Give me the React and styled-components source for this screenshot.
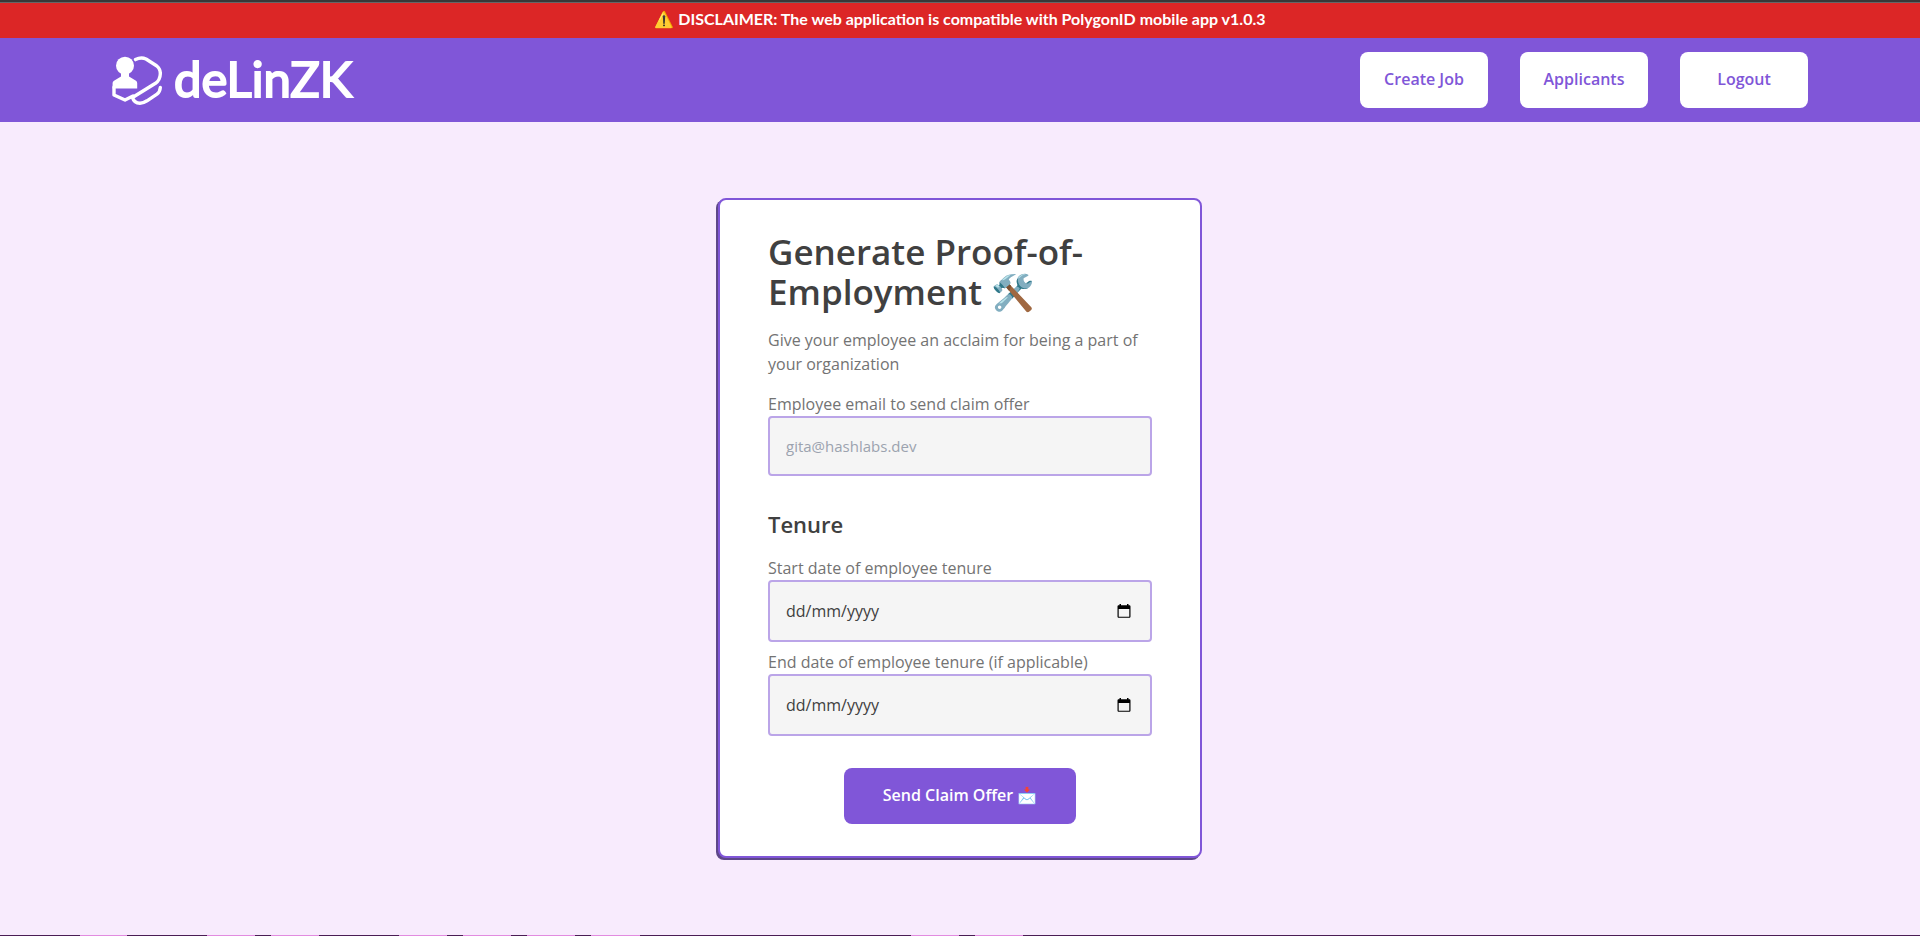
import React, { useId } from "react";
import styled, { createGlobalStyle, css } from "styled-components";

const colors = {
  purple: "#8056d8",
  purpleLight: "#bba5e8",
  purpleDark: "#5e4789",
  lavender: "#f8ebfd",
  red: "#dc2626",
  ink: "#404040",
  muted: "#737373",
  field: "#f5f5f5",
  plum: "#4b1d55",
  pink: "#e28be0",
};

const GlobalStyle = createGlobalStyle`
  *, *::before, *::after { box-sizing: border-box; }
  body {
    margin: 0;
    background: ${colors.lavender};
    color: ${colors.ink};
    font-family: "Open Sans", "Noto Color Emoji", sans-serif;
    font-size: 16px;
    line-height: 24px;
  }
  button, input { font: inherit; }
`;

const Page = styled.div`
  min-height: 100vh;
  display: flex;
  flex-direction: column;
  border-top: 2px solid #383838;
`;

const Disclaimer = styled.p`
  margin: 0;
  padding: 4px 16px 7px;
  border-top: 1px solid #666666;
  background: ${colors.red};
  color: white;
  font-family: Lato, "Noto Color Emoji", sans-serif;
  font-weight: 700;
  text-align: center;
`;

const Header = styled.header`
  display: flex;
  align-items: center;
  justify-content: space-between;
  flex-wrap: wrap;
  padding: 14px 112px;
  background: ${colors.purple};
`;

const HomeLink = styled.a`
  display: flex;
  align-items: center;
  gap: 12px;
  color: white;
  text-decoration: none;
`;

const Wordmark = styled.span`
  font-family: Lato, sans-serif;
  font-size: 49px;
  font-weight: 400;
  line-height: 52px;
  padding-bottom: 4px;
  -webkit-text-stroke: 2px white;
  stroke-linejoin: round;
`;

const Nav = styled.nav`
  display: flex;
  gap: 32px;
`;

const Button = styled.button`
  height: 56px;
  min-width: 128px;
  padding: 0 16px 2px;
  border: 0;
  border-radius: 8px;
  background: white;
  color: ${colors.purple};
  font-weight: 600;
  cursor: pointer;

  ${(p) =>
    p.$primary &&
    css`
      align-self: center;
      min-width: 232px;
      margin-top: 32px;
      background: ${colors.purple};
      color: white;
    `}
`;

const Main = styled.main`
  flex: 1;
  display: flex;
  justify-content: center;
  align-items: center;
  padding: 32px 16px 34px;
`;

const Card = styled.form`
  display: flex;
  flex-direction: column;
  width: 100%;
  max-width: 484px;
  padding: 32px 48px;
  border: 2px solid ${colors.purple};
  border-radius: 8px;
  background: white;
  box-shadow: -2px 2px 0 ${colors.purpleDark};
`;

const Title = styled.h1`
  margin: 0;
  font-size: 35px;
  font-weight: 600;
  line-height: 40px;
`;

const Intro = styled.p`
  margin: 16px 0;
  color: ${colors.muted};
`;

const SectionTitle = styled.h2`
  margin: 32px 0 16px;
  font-size: 22px;
  font-weight: 600;
  line-height: 32px;
`;

const FieldGroup = styled.div`
  display: flex;
  flex-direction: column;

  & + & {
    margin-top: 8px;
  }
`;

const Label = styled.label`
  color: ${colors.muted};
  font-weight: 500;
`;

const InputFrame = styled.div`
  display: flex;
  align-items: center;
  height: ${(p) => (p.$tall ? 62 : 60)}px;
  padding: 0 16px;
  border: 2px solid ${colors.purpleLight};
  border-radius: 4px;
  background: ${colors.field};
`;

const Input = styled.input`
  flex: 1;
  min-width: 0;
  padding: 0;
  border: 0;
  outline: 0;
  background: transparent;
  color: ${colors.ink};
  font-size: ${(p) => (p.$strong ? 16 : 15)}px;

  &::placeholder {
    color: ${(p) => (p.$strong ? colors.ink : "#9ca3af")};
    opacity: 1;
  }
`;

const PickerButton = styled.button`
  display: flex;
  padding: 2px;
  border: 0;
  background: transparent;
  cursor: pointer;
`;

/* Pink dashes on the plum base line, as [start, end] in pixels. */
const dashes = [
  [80, 127], [207, 255], [271, 319], [399, 447], [463, 511],
  [527, 575], [591, 640], [911, 959], [975, 1023],
];

const stops = dashes
  .map(([a, b]) => `${colors.plum} ${a}px, ${colors.pink} ${a}px ${b}px, ${colors.plum} ${b}px`)
  .join(", ");

const BaseLine = styled.div`
  height: 1px;
  background: linear-gradient(to right, ${colors.plum} 0, ${stops});
`;

function LogoMark() {
  return (
    <svg width="50" height="52" viewBox="0 -2 50 52" fill="none" stroke="white" strokeWidth="3.4" strokeLinecap="round" strokeLinejoin="round" aria-hidden="true">
      <circle cx="13" cy="9.7" r="9" fill="white" stroke="none" />
      <path d="M.6 27 Q.6 25.5 2 24.7 L9 20.5 V17 H17 V20.5 L24 24.7 Q25.2 25.5 25.2 27 V32.4 H.6Z" fill="white" stroke="none" />
      <path d="M2 31 V39 L13 44 L21 40" />
      <path d="M23.5 3.6 Q29 .8 34 3 L44.5 9.7 Q48.6 13 48.3 18 Q48.1 24 43.5 27.3 L20.5 41.5 Q22 47 28 47.3 Q31 47.3 35 44.8 L45 38.2 Q48 36 48.3 31.5" />
    </svg>
  );
}

function CalendarIcon() {
  return (
    <svg width="16" height="16" viewBox="0 0 16 16" aria-hidden="true">
      <path d="M3.5 1h1.5v1.3h6V1h1.5v1.3h.7c.8 0 1.3.5 1.3 1.2v10c0 .8-.5 1.300-1.300 1.300H2.800c-.8 0-1.300-.5-1.300-1.300V3.500c0-.7.5-1.200 1.300-1.200h.7zM2.700 6v7.700h10.600V6z" fill="black" fillRule="evenodd" />
    </svg>
  );
}

function Field({ label, date, ...input }) {
  const id = useId();
  return (
    <FieldGroup>
      <Label htmlFor={id}>{label}</Label>
      <InputFrame $tall={date}>
        <Input id={id} $strong={date} {...input} />
        {date && (
          <PickerButton type="button" aria-label="Open calendar">
            <CalendarIcon />
          </PickerButton>
        )}
      </InputFrame>
    </FieldGroup>
  );
}

export default function App() {
  return (
    <Page>
      <GlobalStyle />
      <Disclaimer>
        ⚠️ DISCLAIMER: The web application is compatible with PolygonID mobile app v1.0.3
      </Disclaimer>
      <Header>
        <HomeLink href="#">
          <LogoMark />
          <Wordmark>deLinZK</Wordmark>
        </HomeLink>
        <Nav>
          <Button type="button">Create Job</Button>
          <Button type="button">Applicants</Button>
          <Button type="button">Logout</Button>
        </Nav>
      </Header>
      <Main>
        <Card onSubmit={(e) => e.preventDefault()}>
          <Title>Generate Proof-of-Employment 🛠️</Title>
          <Intro>Give your employee an acclaim for being a part of your organization</Intro>
          <Field label="Employee email to send claim offer" type="email" placeholder="gita@hashlabs.dev" />
          <SectionTitle>Tenure</SectionTitle>
          <Field label="Start date of employee tenure" date type="text" placeholder="dd/mm/yyyy" />
          <Field label="End date of employee tenure (if applicable)" date type="text" placeholder="dd/mm/yyyy" />
          <Button type="submit" $primary>Send Claim Offer 📩</Button>
        </Card>
      </Main>
      <BaseLine />
    </Page>
  );
}
